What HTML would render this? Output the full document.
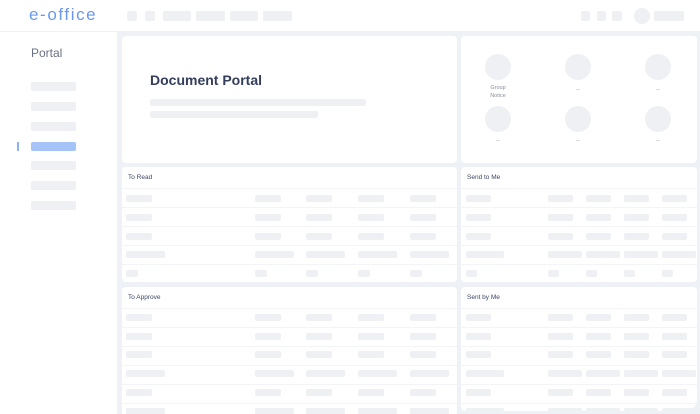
<!DOCTYPE html>
<html style="width:700px;height:414px;overflow:hidden"><head><meta charset="utf-8"><style>
*{margin:0;padding:0;box-sizing:border-box}
body{width:700px;height:414px;overflow:hidden;background:#eef1f6;font-family:"Liberation Sans",sans-serif;position:relative}
.a{position:absolute}
.b{position:absolute;height:7px;background:#eef0f4;border-radius:2px}
.card{position:absolute;background:#fff;border-radius:4px;overflow:hidden}
.t{position:absolute;font-size:6.5px;color:#3d4766}
.ln{position:absolute;left:0;right:0;height:1px;background:#f3f4f7}
.c{position:absolute;width:26px;height:26px;border-radius:50%;background:#eef0f4}
.l{position:absolute;font-size:5.5px;color:#8a90a0;text-align:center;width:40px;line-height:8px}
</style></head><body>
<div class="a" style="left:0;top:0;width:700px;height:31px;background:#fff"></div>
<div class="a" style="left:29px;top:5px;font-size:17px;color:#6b98ee;letter-spacing:1.6px;font-weight:300">e-office</div>
<div class="b" style="left:127px;top:11px;width:10px;height:10px"></div>
<div class="b" style="left:145px;top:11px;width:10px;height:10px"></div>
<div class="b" style="left:163px;top:11px;width:28px;height:10px"></div>
<div class="b" style="left:196px;top:11px;width:29px;height:10px"></div>
<div class="b" style="left:230px;top:11px;width:28px;height:10px"></div>
<div class="b" style="left:263px;top:11px;width:29px;height:10px"></div>
<div class="b" style="left:581px;top:11px;width:9px;height:10px"></div>
<div class="b" style="left:597px;top:11px;width:9px;height:10px"></div>
<div class="b" style="left:612px;top:11px;width:10px;height:10px"></div>
<div class="a" style="left:634px;top:8px;width:16px;height:16px;border-radius:50%;background:#eef0f4"></div>
<div class="b" style="left:654px;top:11px;width:30px;height:10px"></div>

<div class="a" style="left:0;top:32px;width:117px;height:382px;background:#fff"></div>
<div class="a" style="left:31px;top:46px;font-size:12px;color:#6a7183">Portal</div>
<div class="b" style="left:31px;top:82px;width:45px;height:9px"></div>
<div class="b" style="left:31px;top:102px;width:45px;height:9px"></div>
<div class="b" style="left:31px;top:122px;width:45px;height:9px"></div>
<div class="b" style="left:31px;top:142px;width:45px;height:9px;background:#a6c3f7"></div>
<div class="a" style="left:17px;top:142px;width:1.5px;height:9px;background:#8fb2f3"></div>
<div class="b" style="left:31px;top:161px;width:45px;height:9px"></div>
<div class="b" style="left:31px;top:181px;width:45px;height:9px"></div>
<div class="b" style="left:31px;top:201px;width:45px;height:9px"></div>

<div class="card" style="left:122px;top:36px;width:335px;height:127px">
<div class="a" style="left:28px;top:36px;font-size:14px;font-weight:bold;color:#333d5c">Document Portal</div>
<div class="b" style="left:28px;top:63px;width:216px"></div>
<div class="b" style="left:28px;top:75px;width:168px"></div>
</div>
<div class="card" style="left:461px;top:36px;width:236px;height:127px">
<div class="c" style="left:24px;top:18px"></div><div class="c" style="left:104px;top:18px"></div><div class="c" style="left:184px;top:18px"></div>
<div class="c" style="left:24px;top:70px"></div><div class="c" style="left:104px;top:70px"></div><div class="c" style="left:184px;top:70px"></div>
<div class="l" style="left:17px;top:48px">Group<br>Notice</div>
<div class="l" style="left:97px;top:50px">--</div><div class="l" style="left:177px;top:50px">--</div>
<div class="l" style="left:17px;top:101px">--</div><div class="l" style="left:97px;top:101px">--</div><div class="l" style="left:177px;top:101px">--</div>
</div>

<div class="card" style="left:122px;top:167px;width:335px;height:115px">
<div class="t" style="left:6px;top:7px">To Read</div>
<div class="ln" style="top:21px"></div><div class="ln" style="top:40px"></div><div class="ln" style="top:59px"></div><div class="ln" style="top:78px"></div><div class="ln" style="top:97px"></div>
<div class="b" style="left:4px;top:28px;width:26px"></div><div class="b" style="left:133px;top:28px;width:26px"></div><div class="b" style="left:184px;top:28px;width:26px"></div><div class="b" style="left:236px;top:28px;width:26px"></div><div class="b" style="left:288px;top:28px;width:26px"></div>
<div class="b" style="left:4px;top:47px;width:26px"></div><div class="b" style="left:133px;top:47px;width:26px"></div><div class="b" style="left:184px;top:47px;width:26px"></div><div class="b" style="left:236px;top:47px;width:26px"></div><div class="b" style="left:288px;top:47px;width:26px"></div>
<div class="b" style="left:4px;top:66px;width:26px"></div><div class="b" style="left:133px;top:66px;width:26px"></div><div class="b" style="left:184px;top:66px;width:26px"></div><div class="b" style="left:236px;top:66px;width:26px"></div><div class="b" style="left:288px;top:66px;width:26px"></div>
<div class="b" style="left:4px;top:84px;width:39px"></div><div class="b" style="left:133px;top:84px;width:39px"></div><div class="b" style="left:184px;top:84px;width:39px"></div><div class="b" style="left:236px;top:84px;width:39px"></div><div class="b" style="left:288px;top:84px;width:39px"></div>
<div class="b" style="left:4px;top:103px;width:12px"></div><div class="b" style="left:133px;top:103px;width:12px"></div><div class="b" style="left:184px;top:103px;width:12px"></div><div class="b" style="left:236px;top:103px;width:12px"></div><div class="b" style="left:288px;top:103px;width:12px"></div>
</div>

<div class="card" style="left:461px;top:167px;width:236px;height:115px">
<div class="t" style="left:6px;top:7px">Send to Me</div>
<div class="ln" style="top:21px"></div><div class="ln" style="top:40px"></div><div class="ln" style="top:59px"></div><div class="ln" style="top:78px"></div><div class="ln" style="top:97px"></div>
<div class="b" style="left:5px;top:28px;width:25px"></div><div class="b" style="left:87px;top:28px;width:25px"></div><div class="b" style="left:125px;top:28px;width:25px"></div><div class="b" style="left:163px;top:28px;width:25px"></div><div class="b" style="left:201px;top:28px;width:25px"></div>
<div class="b" style="left:5px;top:47px;width:25px"></div><div class="b" style="left:87px;top:47px;width:25px"></div><div class="b" style="left:125px;top:47px;width:25px"></div><div class="b" style="left:163px;top:47px;width:25px"></div><div class="b" style="left:201px;top:47px;width:25px"></div>
<div class="b" style="left:5px;top:66px;width:25px"></div><div class="b" style="left:87px;top:66px;width:25px"></div><div class="b" style="left:125px;top:66px;width:25px"></div><div class="b" style="left:163px;top:66px;width:25px"></div><div class="b" style="left:201px;top:66px;width:25px"></div>
<div class="b" style="left:5px;top:84px;width:38px"></div><div class="b" style="left:87px;top:84px;width:34px"></div><div class="b" style="left:125px;top:84px;width:34px"></div><div class="b" style="left:163px;top:84px;width:34px"></div><div class="b" style="left:201px;top:84px;width:34px"></div>
<div class="b" style="left:5px;top:103px;width:11px"></div><div class="b" style="left:87px;top:103px;width:11px"></div><div class="b" style="left:125px;top:103px;width:11px"></div><div class="b" style="left:163px;top:103px;width:11px"></div><div class="b" style="left:201px;top:103px;width:11px"></div>
</div>

<div class="card" style="left:122px;top:287px;width:335px;height:127px;border-radius:4px 4px 0 0">
<div class="t" style="left:6px;top:7px">To Approve</div>
<div class="ln" style="top:21px"></div><div class="ln" style="top:40px"></div><div class="ln" style="top:59px"></div><div class="ln" style="top:78px"></div><div class="ln" style="top:97px"></div><div class="ln" style="top:116px"></div>
<div class="b" style="left:4px;top:27px;width:26px"></div><div class="b" style="left:133px;top:27px;width:26px"></div><div class="b" style="left:184px;top:27px;width:26px"></div><div class="b" style="left:236px;top:27px;width:26px"></div><div class="b" style="left:288px;top:27px;width:26px"></div>
<div class="b" style="left:4px;top:46px;width:26px"></div><div class="b" style="left:133px;top:46px;width:26px"></div><div class="b" style="left:184px;top:46px;width:26px"></div><div class="b" style="left:236px;top:46px;width:26px"></div><div class="b" style="left:288px;top:46px;width:26px"></div>
<div class="b" style="left:4px;top:64px;width:26px"></div><div class="b" style="left:133px;top:64px;width:26px"></div><div class="b" style="left:184px;top:64px;width:26px"></div><div class="b" style="left:236px;top:64px;width:26px"></div><div class="b" style="left:288px;top:64px;width:26px"></div>
<div class="b" style="left:4px;top:83px;width:39px"></div><div class="b" style="left:133px;top:83px;width:39px"></div><div class="b" style="left:184px;top:83px;width:39px"></div><div class="b" style="left:236px;top:83px;width:39px"></div><div class="b" style="left:288px;top:83px;width:39px"></div>
<div class="b" style="left:4px;top:102px;width:26px"></div><div class="b" style="left:133px;top:102px;width:26px"></div><div class="b" style="left:184px;top:102px;width:26px"></div><div class="b" style="left:236px;top:102px;width:26px"></div><div class="b" style="left:288px;top:102px;width:26px"></div>
<div class="b" style="left:4px;top:121px;width:39px"></div><div class="b" style="left:133px;top:121px;width:39px"></div><div class="b" style="left:184px;top:121px;width:39px"></div><div class="b" style="left:236px;top:121px;width:39px"></div><div class="b" style="left:288px;top:121px;width:39px"></div>
</div>

<div class="card" style="left:461px;top:287px;width:236px;height:124px;border-radius:4px 4px 12px 4px">
<div class="t" style="left:6px;top:7px">Sent by Me</div>
<div class="ln" style="top:21px"></div><div class="ln" style="top:40px"></div><div class="ln" style="top:59px"></div><div class="ln" style="top:78px"></div><div class="ln" style="top:97px"></div><div class="ln" style="top:116px"></div>
<div class="b" style="left:5px;top:27px;width:25px"></div><div class="b" style="left:87px;top:27px;width:25px"></div><div class="b" style="left:125px;top:27px;width:25px"></div><div class="b" style="left:163px;top:27px;width:25px"></div><div class="b" style="left:201px;top:27px;width:25px"></div>
<div class="b" style="left:5px;top:46px;width:25px"></div><div class="b" style="left:87px;top:46px;width:25px"></div><div class="b" style="left:125px;top:46px;width:25px"></div><div class="b" style="left:163px;top:46px;width:25px"></div><div class="b" style="left:201px;top:46px;width:25px"></div>
<div class="b" style="left:5px;top:64px;width:25px"></div><div class="b" style="left:87px;top:64px;width:25px"></div><div class="b" style="left:125px;top:64px;width:25px"></div><div class="b" style="left:163px;top:64px;width:25px"></div><div class="b" style="left:201px;top:64px;width:25px"></div>
<div class="b" style="left:5px;top:83px;width:38px"></div><div class="b" style="left:87px;top:83px;width:34px"></div><div class="b" style="left:125px;top:83px;width:34px"></div><div class="b" style="left:163px;top:83px;width:34px"></div><div class="b" style="left:201px;top:83px;width:34px"></div>
<div class="b" style="left:5px;top:102px;width:25px"></div><div class="b" style="left:87px;top:102px;width:25px"></div><div class="b" style="left:125px;top:102px;width:25px"></div><div class="b" style="left:163px;top:102px;width:25px"></div><div class="b" style="left:201px;top:102px;width:25px"></div>
<div class="b" style="left:5px;top:121px;width:38px"></div><div class="b" style="left:87px;top:121px;width:34px"></div><div class="b" style="left:125px;top:121px;width:34px"></div><div class="b" style="left:163px;top:121px;width:34px"></div><div class="b" style="left:201px;top:121px;width:34px"></div>
</div>
</body></html>
